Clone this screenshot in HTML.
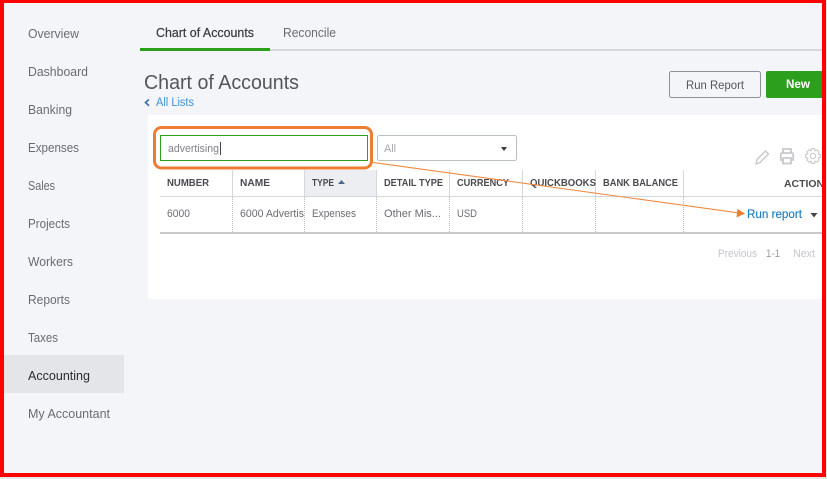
<!DOCTYPE html>
<html><head><meta charset="utf-8"><style>
html,body{margin:0;padding:0;background:#f4f5f8;width:827px;height:479px;overflow:hidden}
svg{display:block;position:absolute;left:0;top:0}
text{font-family:"Liberation Sans",sans-serif;white-space:pre}
.nav{font-size:12.5px;fill:#6b6c72}
.th{font-size:10.5px;font-weight:bold;fill:#4a4b50}
.td{font-size:11px;fill:#6b6c72}
</style></head><body>
<svg width="827" height="479" viewBox="0 0 827 479" xmlns="http://www.w3.org/2000/svg">
<rect width="827" height="479" fill="#f4f5f8"/>
<rect x="4" y="355" width="120" height="38" fill="#e3e5e8"/>
<g class="nav">
<text x="28" y="38" textLength="51" lengthAdjust="spacingAndGlyphs">Overview</text>
<text x="28" y="76" textLength="60" lengthAdjust="spacingAndGlyphs">Dashboard</text>
<text x="28" y="114" textLength="44" lengthAdjust="spacingAndGlyphs">Banking</text>
<text x="28" y="152" textLength="51" lengthAdjust="spacingAndGlyphs">Expenses</text>
<text x="28" y="190" textLength="27" lengthAdjust="spacingAndGlyphs">Sales</text>
<text x="28" y="228" textLength="42" lengthAdjust="spacingAndGlyphs">Projects</text>
<text x="28" y="266" textLength="45" lengthAdjust="spacingAndGlyphs">Workers</text>
<text x="28" y="304" textLength="42" lengthAdjust="spacingAndGlyphs">Reports</text>
<text x="28" y="342" textLength="30" lengthAdjust="spacingAndGlyphs">Taxes</text>
<text x="28" y="380" textLength="62" lengthAdjust="spacingAndGlyphs" style="fill:#2b2c30">Accounting</text>
<text x="28" y="418" textLength="82" lengthAdjust="spacingAndGlyphs">My Accountant</text>
</g>
<rect x="270" y="49" width="552" height="2" fill="#d4d7dc"/>
<rect x="140" y="48" width="130" height="3" fill="#2ca01c"/>
<text x="156" y="37" font-size="12.5" fill="#393a3d" stroke="#393a3d" stroke-width=".2" textLength="98" lengthAdjust="spacingAndGlyphs">Chart of Accounts</text>
<text x="283" y="37" font-size="12.5" fill="#6b6c72" textLength="53" lengthAdjust="spacingAndGlyphs">Reconcile</text>
<text x="144" y="89" font-size="20" fill="#55565b" textLength="155" lengthAdjust="spacingAndGlyphs">Chart of Accounts</text>
<path d="M149 99.5L145.5 102.5L149 105.8" fill="none" stroke="#3f70b5" stroke-width="1.7"/>
<text x="156" y="106" font-size="11.5" fill="#3d93d8" textLength="38" lengthAdjust="spacingAndGlyphs">All Lists</text>
<rect x="669.5" y="71.5" width="91" height="26" rx="2" fill="#f4f5f8" stroke="#8d9096"/>
<text x="686" y="89" font-size="11.5" fill="#55565a" textLength="58" lengthAdjust="spacingAndGlyphs">Run Report</text>
<rect x="766" y="71" width="60" height="27" rx="2" fill="#2ca01c"/>
<text x="786" y="88" font-size="11.5" font-weight="bold" fill="#fff" textLength="24" lengthAdjust="spacingAndGlyphs">New</text>
<rect x="148" y="115" width="674" height="184" fill="#fff"/>
<rect x="305" y="170" width="71.500" height="26" fill="#eceef1"/>
<g stroke="#d4d7dc" stroke-width="1">
<path d="M232.500 170V196M304.500 170V196M376.500 170V196M449.500 170V196M522.500 170V196M595.500 170V196M683.500 170V196"/>
<path d="M160 196.500H822"/>
</g>
<g stroke="#b9bbbf" stroke-width="1" stroke-dasharray="1 1">
<path d="M232.500 197V232M304.500 197V232M376.500 197V232M449.500 197V232M522.500 197V232M595.500 197V232M683.500 197V232"/>
</g>
<rect x="160" y="232" width="662" height="2" fill="#c8c9cb"/>
<g class="th">
<text x="167" y="186" textLength="42" lengthAdjust="spacingAndGlyphs">NUMBER</text>
<text x="240" y="186" textLength="30" lengthAdjust="spacingAndGlyphs">NAME</text>
<text x="312" y="186" textLength="22" lengthAdjust="spacingAndGlyphs">TYPE</text>
<text x="384" y="186" textLength="59" lengthAdjust="spacingAndGlyphs">DETAIL TYPE</text>
<text x="457" y="186" textLength="52" lengthAdjust="spacingAndGlyphs">CURRENCY</text>
<text x="530" y="186" textLength="66" lengthAdjust="spacingAndGlyphs">QUICKBOOKS</text>
<text x="603" y="186" textLength="75" lengthAdjust="spacingAndGlyphs">BANK BALANCE</text>
<text x="784" y="187" textLength="40" lengthAdjust="spacingAndGlyphs">ACTION</text>
</g>
<path d="M338 184L341.500 180L345 184Z" fill="#4f6a85"/>
<g class="td">
<text x="167" y="217" textLength="23" lengthAdjust="spacingAndGlyphs">6000</text>
<text x="240" y="217" textLength="64" lengthAdjust="spacingAndGlyphs">6000 Advertis</text>
<text x="312" y="217" textLength="44" lengthAdjust="spacingAndGlyphs">Expenses</text>
<text x="384" y="217" textLength="57" lengthAdjust="spacingAndGlyphs">Other Mis...</text>
<text x="457" y="217" textLength="20" lengthAdjust="spacingAndGlyphs">USD</text>
</g>
<text x="747" y="218" font-size="11.5" fill="#1b7fc4" stroke="#1b7fc4" stroke-width=".15" textLength="55" lengthAdjust="spacingAndGlyphs">Run report</text>
<path d="M810.500 213H817.500L814 217.500Z" fill="#45464a"/>
<text x="718" y="257" font-size="11" fill="#c4c5c8" textLength="39" lengthAdjust="spacingAndGlyphs">Previous</text>
<text x="766" y="257" font-size="11" fill="#9a9b9f" textLength="14" lengthAdjust="spacingAndGlyphs">1-1</text>
<text x="793" y="257" font-size="11" fill="#c4c5c8" textLength="22" lengthAdjust="spacingAndGlyphs">Next</text>
<rect x="377.500" y="135.500" width="139" height="25" rx="2" fill="#fff" stroke="#babec5"/>
<text x="384" y="152" font-size="11" fill="#a5a6aa" textLength="12" lengthAdjust="spacingAndGlyphs">All</text>
<path d="M501 147H507L504 151Z" fill="#393a3d"/>
<rect x="160.500" y="135.500" width="207" height="25" fill="#fff" stroke="#2ca01c"/>
<text x="168" y="152" font-size="11" fill="#808186" textLength="51" lengthAdjust="spacingAndGlyphs">advertising</text>
<rect x="220" y="142" width="1" height="13" fill="#444"/>
<rect x="154.500" y="127.500" width="217" height="40.500" rx="7" fill="none" stroke="#ed7d31" stroke-width="3"/>
<path d="M373 162.500L738 212.800" stroke="#f08a42" stroke-width="1.100" fill="none"/>
<path d="M745 213.500L736.500 217.500L737.500 209Z" fill="#ed7d31"/>
<g fill="none" stroke="#c7c9cc">
<path d="M756 164L757 159.500L765.500 151L768.500 154L760 162.500Z" stroke-width="1.400"/>
<path d="M783 153V149H791V153M783 160H780.800V154.500Q780.800 153 782.500 153H791.500Q793.200 153 793.200 154.500V160H791M783 158H791V163.500H783Z" stroke-width="1.800"/>
<circle cx="813" cy="156" r="2.700" stroke-width="1.100"/>
<path d="M811.500 148.700H814.500L815 150.800L817 149.800L819.200 152L818.200 154L820.300 154.500V157.500L818.200 158L819.200 160L817 162.200L815 161.200L814.500 163.300H811.500L811 161.200L809 162.200L806.800 160L807.800 158L805.700 157.500V154.500L807.800 154L806.800 152L809 149.800L811 150.800Z" stroke-width="1.100"/>
</g>
<rect x="0" y="0" width="827" height="3" fill="#fe0000"/>
<rect x="0" y="0" width="4" height="477" fill="#fe0000"/>
<rect x="822" y="0" width="4" height="477" fill="#fe0000"/>
<rect x="0" y="473" width="826" height="4" fill="#fe0000"/>
<rect x="0" y="477" width="827" height="2" fill="#e6e6e6"/>
<rect x="826" y="0" width="1" height="479" fill="#e6e6e6"/>
</svg>
</body></html>
